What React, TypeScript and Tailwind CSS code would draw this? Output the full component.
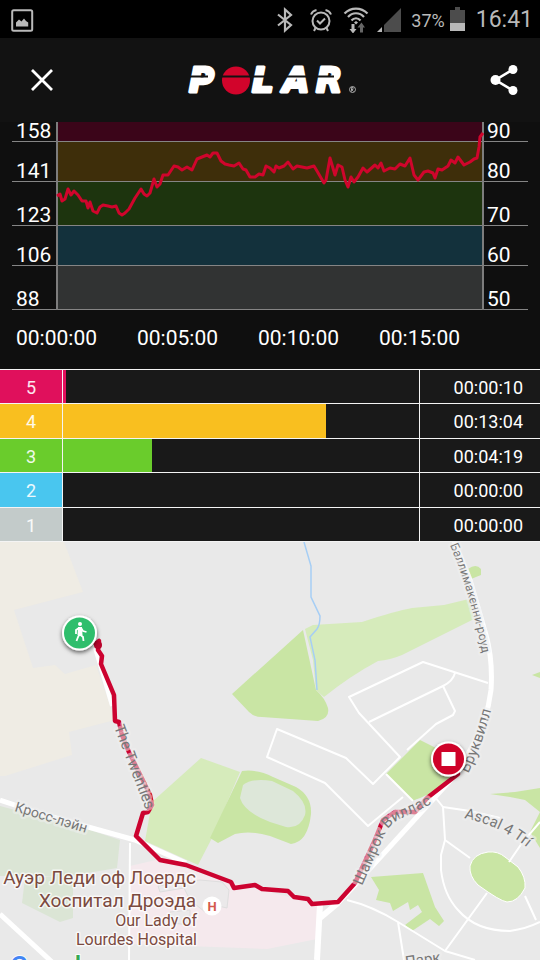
import React from "react";

type Band = { bpm: number; percent: number; className: string };
type Zone = { zone: number; time: string; share: number; colour: string };

const bands: Band[] = [
  { bpm: 158, percent: 90, className: "h-5 [--band:#3b0519]" },
  { bpm: 141, percent: 80, className: "h-10 [--band:#3e2e0a]" },
  { bpm: 123, percent: 70, className: "h-11 [--band:#1d340e]" },
  { bpm: 106, percent: 60, className: "h-10 [--band:#13313c]" },
  { bpm: 88, percent: 50, className: "h-11 [--band:#313333]" },
];

const ticks = ["00:00:00", "00:05:00", "00:10:00", "00:15:00"];

const zones: Zone[] = [
  { zone: 5, time: "00:00:10", share: 0.9, colour: "bg-[#e0105c]" },
  { zone: 4, time: "00:13:04", share: 73.9, colour: "bg-[#f9bf1f]" },
  { zone: 3, time: "00:04:19", share: 25, colour: "bg-[#6acc2c]" },
  { zone: 2, time: "00:00:00", share: 0, colour: "bg-[#49c6ef]" },
  { zone: 1, time: "00:00:00", share: 0, colour: "bg-[#c3cbca]" },
];

const heartRate =
  "57,196 60,194 62,201 65,199 68,189 71,195 74,191 78,195 82,201 86,201 88,208 90,202 93,211 97,213 100,207 103,205 108,206 112,207 116,206 119,213 122,215 125,213 129,209 135,198 141,189 144,194 147,196 150,193 154,179 157,187 160,184 163,175 168,175 174,166 178,167 182,170 187,167 192,170 197,159 202,157 207,155 210,157 213,153 217,153 221,161 225,164 229,165 234,166 239,163 243,169 246,170 250,177 255,177 259,174 263,175 266,166 270,168 274,172 276,166 279,168 284,166 288,162 293,169 297,166 302,167 307,168 314,166 317,171 324,183 326,180 330,158 335,175 338,165 342,167 345,180 348,187 351,177 354,182 358,177 363,168 367,172 375,165 378,168 381,163 384,171 390,168 395,169 400,164 405,166 410,158 414,175 418,180 424,172 428,171 433,173 435,178 438,169 442,170 448,166 451,160 455,163 458,157 464,165 470,162 474,159 477,158 479,147 480,137 483,133";

function StatusBar() {
  return (
    <div className="flex h-[38px] items-center bg-black pl-[11px] pr-[7px] pt-[2px] text-[#b9b9b9]">
      <svg className="h-[23px] w-[23px]" viewBox="0 0 23 23" aria-hidden="true">
        <rect x="1.2" y="1.2" width="20" height="20.6" rx="1.5" fill="none" stroke="currentColor" strokeWidth="2" />
        <path d="M5 17.5v-4l3-3 2.5 2L13 9.500l2 2.500 2.200 1.500v4z" fill="currentColor" />
      </svg>
      <svg className="ml-auto h-[26px] w-[18px]" viewBox="0 0 18 26" fill="none" stroke="currentColor" strokeWidth="2.2" aria-hidden="true">
        <path d="M2 7.500l13 10.500-6 5.500V2.500l6 5.500L2 18.500" />
      </svg>
      <svg className="ml-4 h-[24px] w-[22px]" viewBox="0 0 22 24" fill="none" stroke="currentColor" strokeWidth="2" aria-hidden="true">
        <circle cx="11" cy="13" r="8.500" />
        <path d="M7 12.500l3 3 5-5M1 6.500C2 4 4 2.500 6.500 2M21 6.500C20 4 18 2.500 15.500 2M5.500 20l-1.500 3M16.500 20l1.500 3" />
      </svg>
      <svg className="ml-[11px] h-[26px] w-[26px]" viewBox="0 0 26 26" fill="none" stroke="currentColor" strokeWidth="2.2" aria-hidden="true">
        <path d="M1.500 6.500C8 0 18 0 24.500 6.500M5 10c4.500-5 11.500-5 16 0M8.500 13.500c2.500-3 6.500-3 9 0" />
        <path d="M11 15.500l2-1.500 2 1.500-2 2z" fill="currentColor" stroke="none" />
        <path d="M8.500 17h3v5h2l-3.500 4.500L6.500 22h2z" fill="currentColor" stroke="none" />
        <path d="M17 25.500v-5h-2.500l4-5 3.500 5h-2v5z" fill="#666" stroke="none" />
      </svg>
      <svg className="ml-2 h-[24px] w-[24px]" viewBox="0 0 24 24" aria-hidden="true">
        <path d="M7 24V17L24 0v24z" fill="#4c4c4c" />
        <path d="M0 24l5-5v5z" fill="currentColor" />
      </svg>
      <span className="ml-[10px] text-[18px]">37%</span>
      <svg className="mb-[2px] ml-[5px] h-[24px] w-[15px]" viewBox="0 0 15 24" aria-hidden="true">
        <path d="M5 0h5v3h5v21H0V3h5z" fill="#4c4c4c" />
        <path d="M0 16h15v8H0z" fill="currentColor" />
      </svg>
      <span className="ml-[11px] text-[23px]">16:41</span>
    </div>
  );
}

function Logo() {
  return (
    <svg className="h-[52px] w-[176px]" viewBox="185 54 176 52" role="img" aria-label="Polar">
      <g
        fontFamily="'DejaVu Sans', sans-serif"
        fontSize="34"
        fontWeight="700"
        fontStyle="italic"
        fill="#fff"
        stroke="#fff"
        strokeWidth="3"
        strokeLinejoin="round"
      >
        <text x="189" y="92">P</text>
        <text x="252" y="92">L</text>
        <text x="283" y="92">A</text>
        <text x="316" y="92">R</text>
      </g>
      <circle cx="236" cy="80.500" r="14" fill="#d2042b" />
      <path d="M186 76.500h22M221 76.500h30M250 76.500h26M285 76.500h26M312 76.500h22" stroke="#121212" strokeWidth="2" />
      <circle cx="352.500" cy="89.500" r="3" fill="none" stroke="#ccc" strokeWidth="0.8" />
      <path d="M351.500 91.500v-4h1.500v2h-1.500l2 2" fill="none" stroke="#ccc" strokeWidth="0.7" />
    </svg>
  );
}

function Header() {
  return (
    <header className="flex h-[84px] items-center justify-between bg-[#121212] pl-[18px] pr-3">
      <button type="button" aria-label="Close" className="flex h-12 w-12 items-center justify-center">
        <svg className="h-6 w-6" viewBox="0 0 24 24" stroke="#fff" strokeWidth="2.8">
          <path d="M2 2l20 20M22 2L2 22" />
        </svg>
      </button>
      <Logo />
      <button type="button" aria-label="Share" className="flex h-12 w-12 items-center justify-center">
        <svg className="h-[30px] w-[28px]" viewBox="0 0 28 30" fill="#fff">
          <path d="M23 4.500L5.500 15 23 25.500" fill="none" stroke="#fff" strokeWidth="2.600" />
          <circle cx="5.500" cy="15" r="5" />
          <circle cx="23" cy="4.500" r="4.500" />
          <circle cx="23" cy="25.500" r="4.500" />
        </svg>
      </button>
    </header>
  );
}

function HeartRateChart() {
  return (
    <section className="h-[247px] bg-[#0f0f0f] text-[21px] leading-5 text-white" aria-label="Heart rate">
      <div className="relative mx-3">
        {bands.map((b) => (
          <div key={b.bpm} className={`flex border-b border-[#858585] ${b.className}`}>
            <div className="flex w-11 items-end pl-1">{b.bpm}</div>
            <div className="-mb-px flex-1 border-x-2 border-[#7d7d7d]">
              <div className="h-full border-b border-[#858585] bg-(--band)" />
            </div>
            <div className="flex w-11 items-end pl-[3px]">{b.percent}</div>
          </div>
        ))}
        <div className="absolute inset-y-0 left-11 right-11">
          <svg className="h-full w-full" viewBox="56 122 428 188" preserveAspectRatio="none" aria-hidden="true">
            <polyline points={heartRate} fill="none" stroke="#d0052c" strokeWidth="3" strokeLinejoin="round" vectorEffect="non-scaling-stroke" />
          </svg>
        </div>
      </div>
      <div className="grid grid-cols-4 pl-4 pr-10 pt-[18px]">
        {ticks.map((t) => (
          <span key={t}>{t}</span>
        ))}
      </div>
    </section>
  );
}

function ZoneTable() {
  return (
    <table className="w-full table-fixed border-separate border-spacing-0 border-t border-[#f4f4f4] bg-[#191919] text-[18px] leading-5 text-white">
      <colgroup>
        <col className="w-[63px]" />
        <col />
        <col className="w-[120px]" />
      </colgroup>
      <tbody>
        {zones.map((z) => (
          <tr key={z.zone} className="group odd:h-[34px] even:h-[35px]">
            <th scope="row" className={`border-b border-r border-[#f4f4f4] p-0 pt-[2px] text-center font-normal text-white/90 ${z.colour}`}>
              {z.zone}
            </th>
            <td className="border-b border-r border-[#f4f4f4] p-0">
              <div className={`h-[33px] group-even:h-[34px] ${z.colour}`} style={{ width: `${z.share}%` }} />
            </td>
            <td className="border-b border-[#f4f4f4] p-0 pr-[17px] pt-[2px] text-right">{z.time}</td>
          </tr>
        ))}
      </tbody>
    </table>
  );
}

function RouteMap() {
  return (
    <svg className="block w-full" viewBox="0 542 540 418" role="img" aria-label="Route map" fontFamily="Roboto, 'Noto Sans', sans-serif">
      <defs>
        <path id="ballymakenny" d="M450 545Q470 593 482 652" />
        <path id="brookville" d="M464 782Q482 748 491 710" />
        <path id="shamrock" d="M362 886L383 838Q388 826 398 820L434 803" />
        <path id="ascal" d="M464 818Q502 826 530 850" />
        <filter id="pin-shadow" x="-40%" y="-40%" width="180%" height="180%">
          <feDropShadow dx="0" dy="2" stdDeviation="2" floodColor="#000" floodOpacity="0.6" />
        </filter>
      </defs>
      <rect y="542" width="540" height="418" fill="#e9e9e9" />

      <path d="M0 542H64L83 592L14 610L33 668L55 665L65 674L96 665L115 720L69 732L72 755L5 776H0z" fill="#efece4" />
      <g fill="#dbe5d5">
        <path d="M0 806L90 830L120 840L117 868L70 876H0z" />
        <path d="M25 878L73 875V918L60 922L22 903z" />
      </g>
      <path d="M130 866L156 860L231 882L320 905L317 939L267 949L130 944z" fill="#f5e9ed" />
      <path d="M200 880L222 882L229 890L227 908L214 905L205 912L190 900L184 888L160 892L158 886zM170 912L190 910V925L172 923z" fill="#ebe9ea" stroke="#dedede" />

      <path d="M303 630L232 694L249 712Q254 717 262 717L318 721Q330 718 328 708Q325 698 316 690z" fill="#c9e5a4" />
      <path d="M305 629L313 625L362 622Q395 611 412 608L444 605L469 599L474 619L402 655Q390 660 378 661Q350 676 324 697L316 690L313 660z" fill="#d6ebbb" />
      <path d="M152 802L201 758L240 772L212 838L198 865L145 841z" fill="#d6ebbb" />
      <path d="M242 771Q258 769 273 777L296 787Q312 796 311 814Q308 842 291 844L270 836Q250 830 235 834L218 843L210 838z" fill="#c9e5a4" />
      <path d="M243 785Q252 778 272 781L293 791Q308 803 305 815Q300 829 286 827L270 822Q244 812 240 798z" fill="#dde7d9" />
      <g fill="#c9e5a4">
        <path d="M420 740L386 774L412 801L428 795L460 772L440 750z" />
        <path d="M468 569Q476 563 481 569V575L471 579z" />
        <path d="M532 675L540 672V678z" />
        <path d="M490 794L515 792L540 788V812L525 800L510 797zM540 812L530 832L540 848z" />
        <path d="M371 877L423 873L435 907L444 921L439 926L430 919L412 931L405 925L422 912L418 905L410 910L408 902L393 911L390 903L376 900L379 890z" />
        <path d="M470 866Q473 854 488 852Q498 851 505 857L518 867Q526 877 525 888Q518 902 507 902Q500 901 478 885Q469 876 470 866z" stroke="#fff" />
      </g>

      <path d="M304 542L311 566V597L320 616Q320 625 317 629L310 637L315 660L317 690" fill="none" stroke="#a6cef5" strokeWidth="1.500" />

      <g fill="none" stroke="#fff" strokeWidth="2" strokeLinejoin="round">
        <path d="M488 683L423 662L349 697L359 713L400 757L373 784L346 758L277 729L267 757L325 783L368 826L403 797" />
        <path d="M455 673Q453 681 443 686L369 722M443 686L455 711L453 715L436 724L407 750" />
        <path d="M386 774L413 801M435 797L443 807L445 840L441 855V870Q444 895 458 910Q476 931 510 931Q526 929 540 922" />
        <path d="M443 807L470 811L500 818M445 840L470 858M509 862L522 843L540 822M525 896L536 920M487 893L445 951" />
        <path d="M347 900Q372 906 398 922L445 951L475 960M398 922L404 960M130 843L129 960" />
      </g>
      <g fill="none" stroke="#fff" strokeLinejoin="round">
        <path d="M452 536L470 580L486 635Q493 660 491 690Q487 722 473 745L458 772L355 885L338 903" strokeWidth="5" />
        <path d="M0 800L45 815L135 840L186 863" strokeWidth="5" />
        <path d="M0 914L52 962" strokeWidth="5" />
        <path d="M320 904L317 960M338 903L320 918" strokeWidth="6" />
        <path d="M95 648L112 706" strokeWidth="4" />
      </g>

      <path
        d="M94 645L99 641L98 650L102 656L101 664L114 695L115 721L119 722L122 735L128 750L150 795L152 805L148 812L143 813L136 836L160 860L186 865L231 882L234 888L255 885L262 889L288 891L294 897L308 899L312 904L338 902L355 883L374 842L383 820L395 812L415 812L427 798L458 774L449 760"
        fill="none"
        stroke="#cc0330"
        strokeWidth="4.500"
        strokeLinejoin="round"
      />
      <circle cx="98" cy="645" r="4" fill="#b8032b" />

      <g fill="#777" stroke="#efefef" strokeOpacity="0.55" strokeWidth="5" strokeLinejoin="round" paintOrder="stroke" fontSize="15">
        <text fontSize="12"><textPath href="#ballymakenny">Баллимакенни-роуд</textPath></text>
        <text textAnchor="end"><textPath href="#brookville" startOffset="100%">Бруквилл</textPath></text>
        <text><textPath href="#shamrock">Шамрок Виллас</textPath></text>
        <text><textPath href="#ascal">Ascal 4 Trí</textPath></text>
        <text transform="translate(114 727) rotate(69)">The Twenties</text>
        <text transform="translate(14 811) rotate(17)" fontSize="14">Кросс-лэйн</text>
        <text transform="translate(406 967) rotate(-8)">Парк</text>
      </g>

      <g fill="#7b4a40" stroke="#fff" strokeOpacity="0.7" strokeWidth="3" strokeLinejoin="round" paintOrder="stroke" textAnchor="end">
        <text x="196" y="884" fontSize="19">Ауэр Леди оф Лоердс</text>
        <text x="196" y="907" fontSize="19">Хоспитал Дроэда</text>
        <text x="197" y="926" fontSize="16">Our Lady of</text>
        <text x="197" y="945" fontSize="16">Lourdes Hospital</text>
      </g>
      <circle cx="212" cy="906" r="9.500" fill="#fff" />
      <text x="212" y="911" fontSize="13" fontWeight="700" fill="#d4594c" textAnchor="middle">H</text>

      <g filter="url(#pin-shadow)">
        <circle cx="79.500" cy="633" r="17.500" fill="#fff" />
        <circle cx="448.500" cy="759" r="17.500" fill="#fff" />
      </g>
      <circle cx="79.500" cy="633" r="15.500" fill="#2fbe6c" />
      <circle cx="80" cy="624" r="2" fill="#fff" />
      <path d="M80 627L79.500 634L83 637L83.500 641M79.500 634L78 637L76.500 641M79 628L76 630V634M81 628L83 631L86.500 632" fill="none" stroke="#fff" strokeWidth="1.800" />
      <path d="M78 627H82L82.500 635H77.500z" fill="#fff" />
      <circle cx="448.500" cy="759" r="15.500" fill="#cf0229" />
      <rect x="441.500" y="752" width="14" height="14" fill="#fff" />

      <text x="10" y="976" fontSize="27" fontWeight="500" stroke="#fff" strokeWidth="2" strokeOpacity="0.8" paintOrder="stroke" aria-label="Google">
        <tspan fill="#4285f4">G</tspan>
        <tspan fill="#ea4335">o</tspan>
        <tspan fill="#fbbc05">o</tspan>
        <tspan fill="#4285f4">g</tspan>
        <tspan fill="#34a853">l</tspan>
        <tspan fill="#ea4335">e</tspan>
      </text>
    </svg>
  );
}

export default function App() {
  return (
    <main className="w-full overflow-hidden bg-[#0f0f0f] font-[Roboto,'Noto_Sans',sans-serif]">
      <StatusBar />
      <Header />
      <HeartRateChart />
      <ZoneTable />
      <RouteMap />
    </main>
  );
}
